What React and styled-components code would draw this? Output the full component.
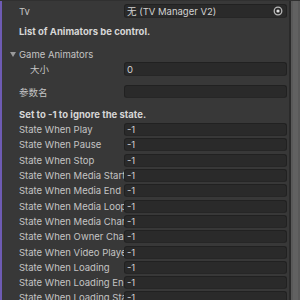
import React from "react";
import styled, { createGlobalStyle } from "styled-components";

const GlobalStyle = createGlobalStyle`
  html, body {
    margin: 0;
    padding: 0;
    background: #383838;
  }
  body {
    font-family: Inter, "Noto Sans CJK SC", "Liberation Sans", sans-serif;
  }
`;

const Frame = styled.div`
  width: 300px;
  height: 300px;
  display: flex;
  overflow: hidden;
  background: #383838;
  border-top: 1px solid #303030;
  box-sizing: border-box;
`;

const Stripe = styled.div`
  width: 2px;
  flex: none;
  background: #6e5bb3;
`;

const Content = styled.div`
  flex: 1;
  display: flex;
  flex-direction: column;
  padding: 2px 2px 0 17px;
  min-width: 0;
`;

const ScrollTrack = styled.div`
  width: 9px;
  flex: none;
  border-left: 2px solid #2a2a2a;
  background: #595959;
  display: flex;
  justify-content: center;
`;

const ScrollThumb = styled.div`
  width: 5px;
  background: #616161;
`;

const Row = styled.div`
  display: flex;
  align-items: center;
  flex: none;
  height: ${(p) => p.$h || 15.3}px;
  margin-top: ${(p) => p.$mt || 0}px;
`;

const Label = styled.div`
  width: ${(p) => 105 - (p.$indent || 0)}px;
  padding-left: ${(p) => p.$indent || 0}px;
  flex: none;
  font-size: 9.5px;
  color: #c4c4c4;
  white-space: nowrap;
  overflow: hidden;
`;

const Heading = styled.div`
  font-size: 9.5px;
  font-weight: 700;
  color: #d6d6d6;
  white-space: nowrap;
`;

const Foldout = styled.div`
  display: flex;
  align-items: center;
  margin-left: -9px;
  font-size: 9.5px;
  color: #c4c4c4;
  white-space: nowrap;
`;

const Arrow = styled.svg`
  width: 6px;
  height: 5px;
  margin-right: 3px;
`;

const Field = styled.div`
  flex: 1;
  height: ${(p) => p.$h || 13}px;
  box-sizing: border-box;
  background: #2a2a2a;
  border: 1px solid #212121;
  border-bottom-color: #262626;
  border-radius: 3px;
  display: flex;
  align-items: center;
  padding-left: 2px;
  font-size: 9.5px;
  color: #d2d2d2;
  white-space: nowrap;
  overflow: hidden;
`;

const FieldText = styled.span`
  flex: 1;
`;

const PickerButton = styled.div`
  width: 14px;
  height: 100%;
  display: flex;
  align-items: center;
  justify-content: center;
  margin-right: 1px;
`;

const states = [
  "State When Play",
  "State When Pause",
  "State When Stop",
  "State When Media Start",
  "State When Media End",
  "State When Media Loop",
  "State When Media Change",
  "State When Owner Change",
  "State When Video Player",
  "State When Loading",
  "State When Loading End",
  "State When Loading Start",
];

function App() {
  return (
    <>
      <GlobalStyle />
      <Frame>
        <Stripe />
        <Content>
          <Row $h={16}>
            <Label>Tv</Label>
            <Field $h={14}>
              <FieldText>无 (TV Manager V2)</FieldText>
              <PickerButton>
                <svg width="10" height="10" viewBox="0 0 10 10">
                  <circle cx="5" cy="5" r="3.8" fill="none" stroke="#b8b8b8" strokeWidth="1.3" />
                  <circle cx="5" cy="5" r="1.6" fill="#e0e0e0" />
                </svg>
              </PickerButton>
            </Field>
          </Row>
          <Row $mt={5} $h={15}>
            <Heading>List of Animators be control.</Heading>
          </Row>
          <Row $mt={8} $h={15}>
            <Foldout>
              <Arrow viewBox="0 0 6 5">
                <polygon points="0,0 6,0 3,5" fill="#9a9a9a" />
              </Arrow>
              Game Animators
            </Foldout>
          </Row>
          <Row $h={14}>
            <Label $indent={11}>大小</Label>
            <Field $h={14}>0</Field>
          </Row>
          <Row $mt={8} $h={15}>
            <Label>参数名</Label>
            <Field />
          </Row>
          <Row $mt={8} $h={15}>
            <Heading>Set to -1 to ignore the state.</Heading>
          </Row>
          {states.map((s) => (
            <Row key={s}>
              <Label>{s}</Label>
              <Field>-1</Field>
            </Row>
          ))}
        </Content>
        <ScrollTrack>
          <ScrollThumb />
        </ScrollTrack>
      </Frame>
    </>
  );
}

export default App;
